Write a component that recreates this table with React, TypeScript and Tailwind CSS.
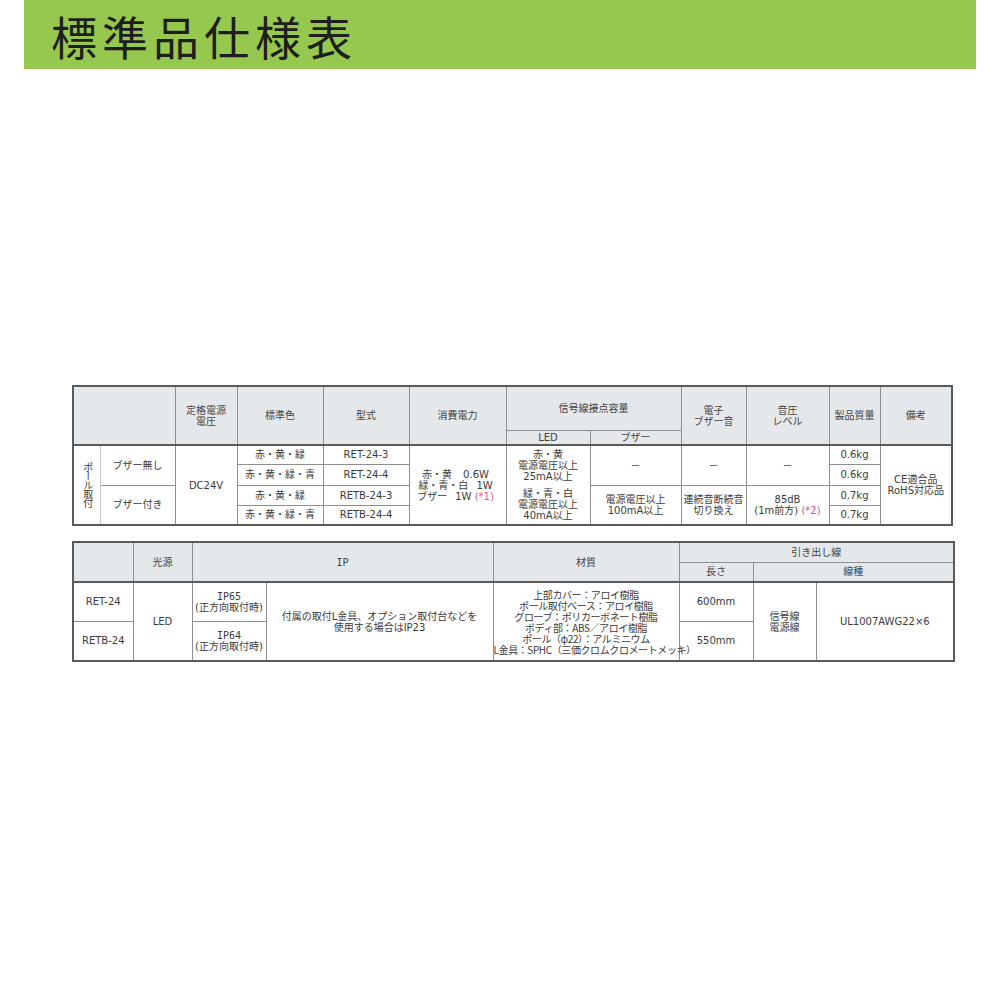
const jp = "font-['DejaVu_Sans','Noto_Sans_CJK_JP',sans-serif]";
const th = "border border-[#8e8e8e] bg-[#e5e8eb] p-0 text-center align-middle text-[10px] font-normal leading-[11px] text-[#444]";
const td = "border border-[#8e8e8e] p-0 text-center align-middle text-[10px] leading-[11px] text-[#3a3a3a]";
const mono = "font-['DejaVu_Sans_Mono',monospace]";

function Note({ children }: { children: string }) {
  return <span className="text-[#e0508a]">{children}</span>;
}

function SpecTable() {
  return (
    <table className={`ml-[72px] mt-[316px] w-[879px] table-fixed border-collapse border-2 border-[#5a5a5a] ${jp}`}>
      <colgroup>
        <col className="w-[27px]" />
        <col className="w-[75px]" />
        <col className="w-[62px]" />
        <col className="w-[86px]" />
        <col className="w-[86px]" />
        <col className="w-[97px]" />
        <col className="w-[84px]" />
        <col className="w-[91px]" />
        <col className="w-[65px]" />
        <col className="w-[83px]" />
        <col className="w-[51px]" />
        <col className="w-[72px]" />
      </colgroup>
      <thead>
        <tr className="h-[44px]">
          <th className={th} colSpan={2} rowSpan={2}></th>
          <th className={th} rowSpan={2}>定格電源<br />電圧</th>
          <th className={th} rowSpan={2}>標準色</th>
          <th className={th} rowSpan={2}>型式</th>
          <th className={th} rowSpan={2}>消費電力</th>
          <th className={th} colSpan={2}>信号線接点容量</th>
          <th className={th} rowSpan={2}>電子<br />ブザー音</th>
          <th className={th} rowSpan={2}>音圧<br />レベル</th>
          <th className={th} rowSpan={2}>製品質量</th>
          <th className={th} rowSpan={2}>備考</th>
        </tr>
        <tr className="h-[15px]">
          <th className={th}>LED</th>
          <th className={th}>ブザー</th>
        </tr>
      </thead>
      <tbody className="border-t-2 border-[#5a5a5a]">
        <tr className="h-[19px]">
          <td className={`${td} border-r-[#c4c4c4]`} rowSpan={4}>
            <span className="inline-block leading-[10px] tracking-[-1px] [writing-mode:vertical-rl]">ポール取付</span>
          </td>
          <td className={`${td} border-l-[#c4c4c4]`} rowSpan={2}>ブザー無し</td>
          <td className={td} rowSpan={4}>DC24V</td>
          <td className={td}>赤・黄・緑</td>
          <td className={td}>RET-24-3</td>
          <td className={`${td} pr-[4px] leading-[10px]`} rowSpan={4}>
            <div>赤・黄<span className="ml-[11px]">0.6W</span></div>
            <div>緑・青・白<span className="ml-[8px]">1W</span></div>
            <div>ブザー<span className="ml-[8px]">1W</span> <Note>(*1)</Note></div>
          </td>
          <td className={`${td} leading-[10.5px]`} rowSpan={4}>
            <div>赤・黄<br />電源電圧以上<br />25mA以上</div>
            <div className="mt-[6px]">緑・青・白<br />電源電圧以上<br />40mA以上</div>
          </td>
          <td className={td} rowSpan={2}>－</td>
          <td className={td} rowSpan={2}>－</td>
          <td className={td} rowSpan={2}>－</td>
          <td className={td}>0.6kg</td>
          <td className={td} rowSpan={4}>CE適合品<br />RoHS対応品</td>
        </tr>
        <tr className="h-[21px]">
          <td className={td}>赤・黄・緑・青</td>
          <td className={td}>RET-24-4</td>
          <td className={td}>0.6kg</td>
        </tr>
        <tr className="h-[20px]">
          <td className={`${td} border-l-[#c4c4c4]`} rowSpan={2}>ブザー付き</td>
          <td className={td}>赤・黄・緑</td>
          <td className={td}>RETB-24-3</td>
          <td className={td} rowSpan={2}>電源電圧以上<br />100mA以上</td>
          <td className={td} rowSpan={2}>連続音断続音<br />切り換え</td>
          <td className={td} rowSpan={2}>85dB<br />(1m前方) <Note>(*2)</Note></td>
          <td className={td}>0.7kg</td>
        </tr>
        <tr className="h-[20px]">
          <td className={td}>赤・黄・緑・青</td>
          <td className={td}>RETB-24-4</td>
          <td className={td}>0.7kg</td>
        </tr>
      </tbody>
    </table>
  );
}

function MaterialTable() {
  return (
    <table className={`ml-[72px] mt-[15px] w-[881px] table-fixed border-collapse border-2 border-[#5a5a5a] ${jp}`}>
      <colgroup>
        <col className="w-[60px]" />
        <col className="w-[59px]" />
        <col className="w-[74px]" />
        <col className="w-[227px]" />
        <col className="w-[186px]" />
        <col className="w-[74px]" />
        <col className="w-[63px]" />
        <col className="w-[138px]" />
      </colgroup>
      <thead>
        <tr className="h-[20px]">
          <th className={th} rowSpan={2}></th>
          <th className={th} rowSpan={2}>光源</th>
          <th className={`${th} ${mono}`} colSpan={2} rowSpan={2}>IP</th>
          <th className={th} rowSpan={2}>材質</th>
          <th className={th} colSpan={3}>引き出し線</th>
        </tr>
        <tr className="h-[20px]">
          <th className={th}>長さ</th>
          <th className={th} colSpan={2}>線種</th>
        </tr>
      </thead>
      <tbody className="border-t-2 border-[#5a5a5a]">
        <tr className="h-[39px]">
          <td className={td}>RET-24</td>
          <td className={td} rowSpan={2}>LED</td>
          <td className={`${td} whitespace-nowrap`}>
            <span className={mono}>IP65</span>
            <br />(正方向取付時)
          </td>
          <td className={td} rowSpan={2}>付属の取付L金具、オプション取付台などを<br />使用する場合はIP23</td>
          <td className={`${td} whitespace-nowrap font-['Noto_Sans_CJK_JP',sans-serif] text-[9px] leading-[11px] tracking-[-0.4px]`} rowSpan={2}>
            上部カバー：アロイ樹脂<br />
            ポール取付ベース：アロイ樹脂<br />
            グローブ：ポリカーボネート樹脂<br />
            ボディ部：ABS／アロイ樹脂<br />
            ポール（φ22）：アルミニウム<br />
            L金具：SPHC（三価クロムクロメートメッキ）
          </td>
          <td className={td}>600mm</td>
          <td className={td} rowSpan={2}>信号線<br />電源線</td>
          <td className={td} rowSpan={2}>UL1007AWG22×6</td>
        </tr>
        <tr className="h-[40px]">
          <td className={td}>RETB-24</td>
          <td className={`${td} whitespace-nowrap`}>
            <span className={mono}>IP64</span>
            <br />(正方向取付時)
          </td>
          <td className={td}>550mm</td>
        </tr>
      </tbody>
    </table>
  );
}

export default function App() {
  return (
    <div className="h-[1000px] w-[1000px] overflow-hidden bg-white">
      <div className="mx-[24px] flex h-[69px] items-center bg-[#96c84f] pl-[27px]">
        <h1 className="font-['Noto_Sans_CJK_JP',sans-serif] text-[46px] font-normal leading-none tracking-[5px] text-[#1e1e1e]">
          標準品仕様表
        </h1>
      </div>
      <SpecTable />
      <MaterialTable />
    </div>
  );
}
